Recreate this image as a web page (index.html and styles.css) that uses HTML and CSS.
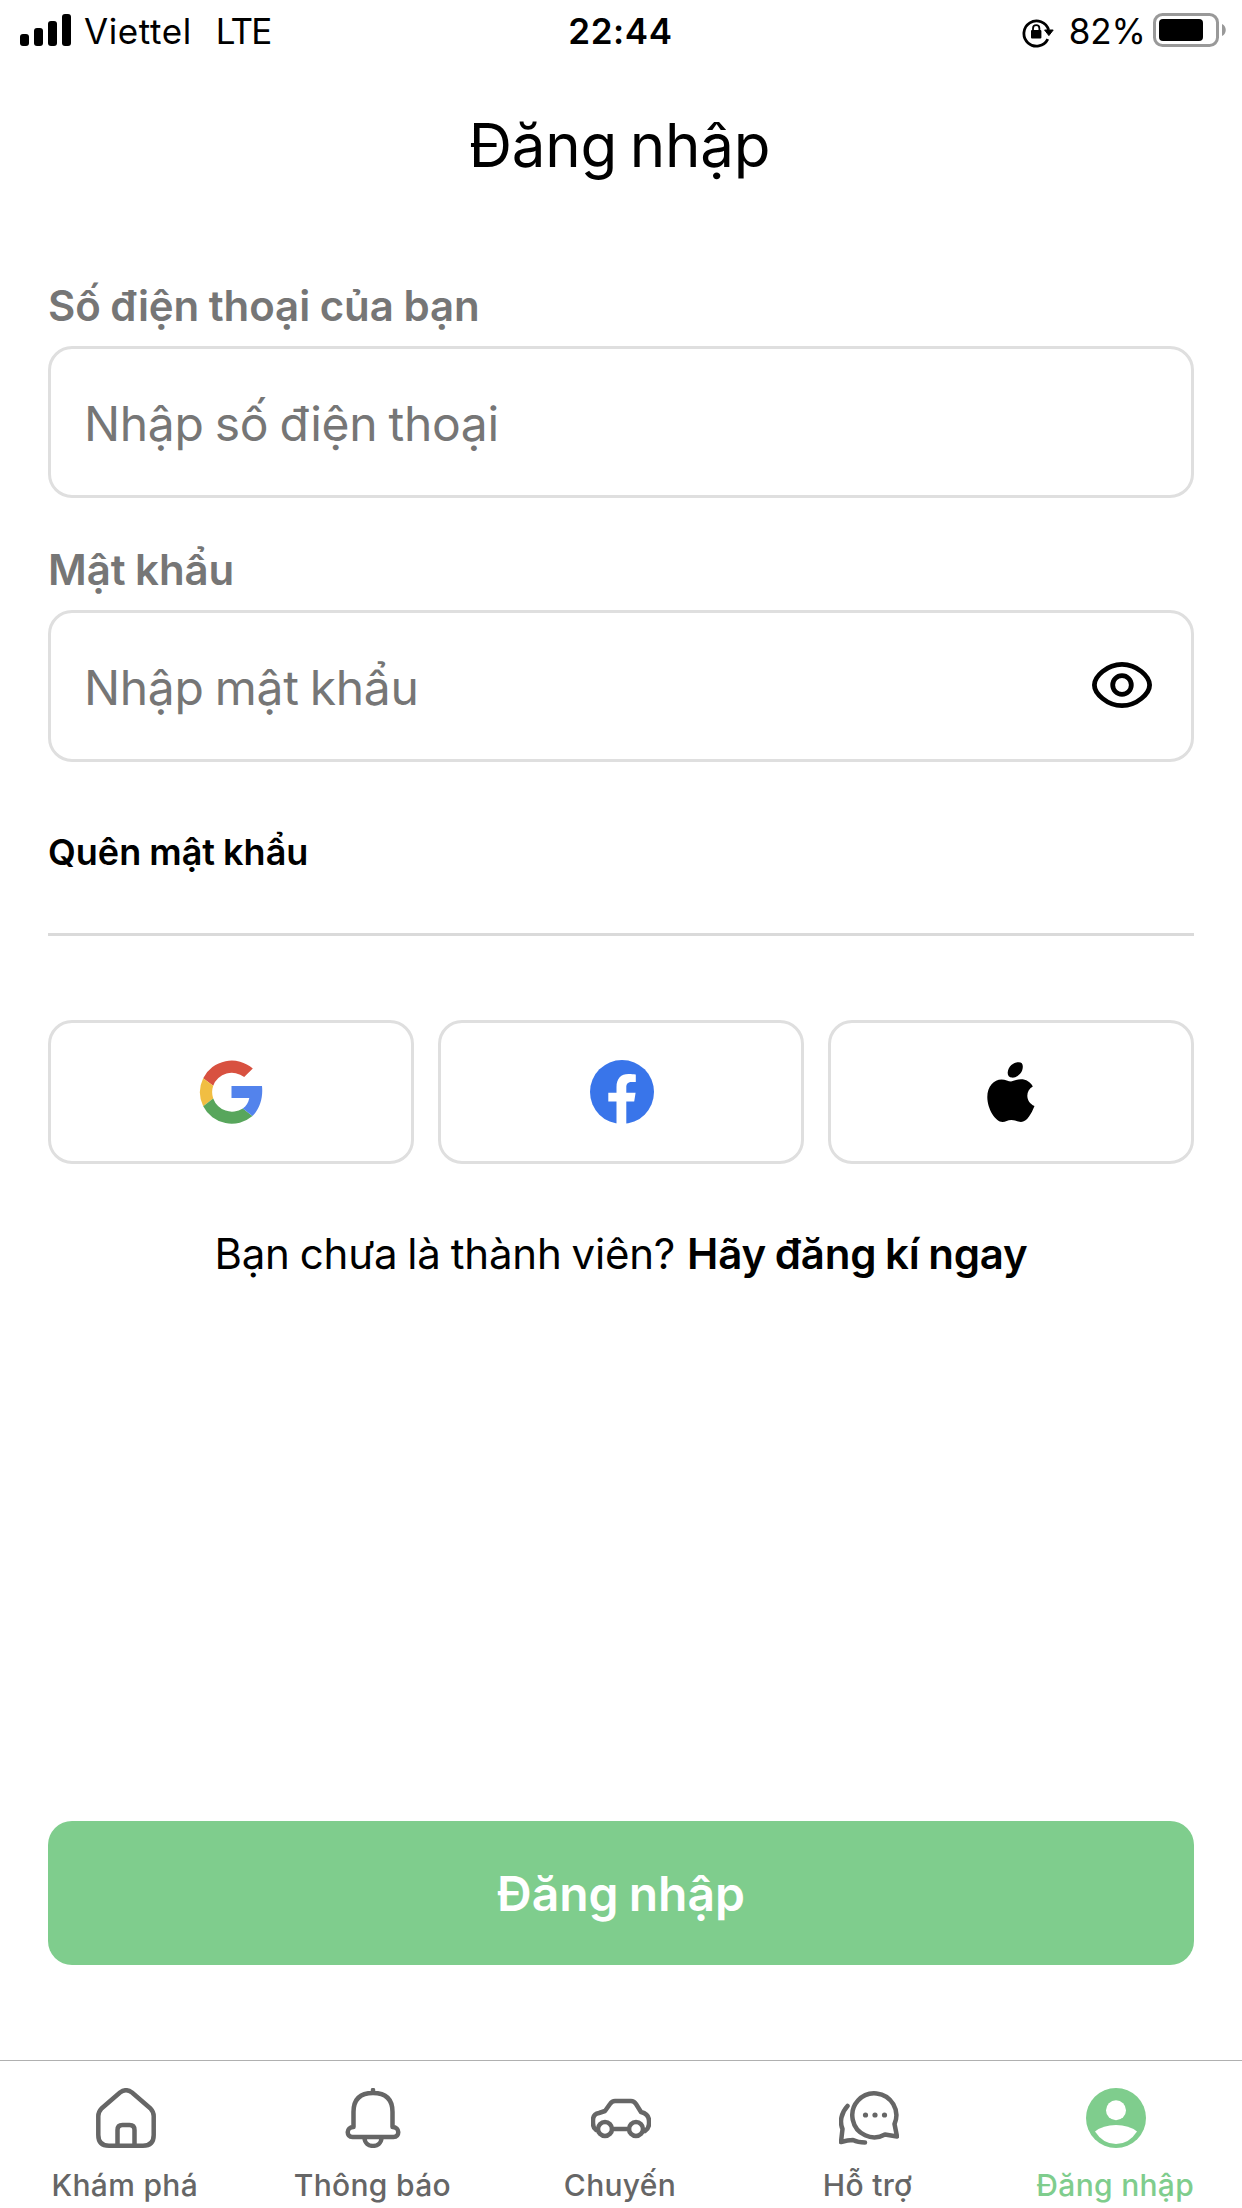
FILE: index.html
```html
<!DOCTYPE html>
<html lang="vi">
<head>
<meta charset="utf-8">
<title>Đăng nhập</title>
<link rel="stylesheet" href="styles.css">
</head>
<body>
<header class="status">
  <div class="status-left">
    <svg class="signal" viewBox="0 0 51 62"><rect x="0" y="34" width="9" height="12" rx="3"/><rect x="14" y="28" width="9" height="18" rx="3"/><rect x="28" y="21" width="9" height="25" rx="3"/><rect x="42" y="14" width="9" height="32" rx="3"/></svg>
    <span class="carrier">Viettel</span>
    <span class="network">LTE</span>
  </div>
  <span class="clock">22:44</span>
  <div class="status-right">
    <svg class="lock" viewBox="0 0 32 62"><path d="M25.800 39.200A12.600 12.600 0 1 1 26.600 30" fill="none" stroke="#000" stroke-width="2.800"/><path d="M22.600 30h8.600l-4.300 5.600z" stroke="#000" stroke-width="1" stroke-linejoin="round"/><rect x="9" y="30" width="10.400" height="8.600" rx="1"/><path d="M11 31v-2.600a3.200 3.200 0 0 1 6.400 0V31" fill="none" stroke="#000" stroke-width="1.800"/></svg>
    <span class="percent">82%</span>
    <svg class="battery" viewBox="0 0 73 62"><rect x="1.500" y="14.500" width="63" height="31" rx="8" fill="none" stroke="#999" stroke-width="3"/><rect x="6" y="19" width="44" height="22" rx="4"/><path d="M69 24c5 2 5 10 0 12z" fill="#999"/></svg>
  </div>
</header>
<h1 class="title">Đăng nhập</h1>
<main class="form">
  <div class="label">Số điện thoại của bạn</div>
  <div class="field"><span>Nhập số điện thoại</span></div>
  <div class="label">Mật khẩu</div>
  <div class="field"><span>Nhập mật khẩu</span>
    <svg class="eye" viewBox="0 0 60 46" fill="none" stroke="#000" stroke-width="4.800"><path d="M2.400 23C2.400 14.500 15 2.400 30 2.400S57.600 14.500 57.600 23 45 43.600 30 43.600 2.400 31.500 2.400 23z"/><circle cx="30" cy="23" r="9.300"/></svg>
  </div>
  <a class="forgot">Quên mật khẩu</a>
  <hr class="divider">
  <div class="social">
    <button class="provider" aria-label="Google"><svg class="google" viewBox="0 0 64 64"><path fill="#d85140" d="M4.200 18.200A32 32 0 0 1 53.800 8.400L45.200 17A20 20 0 0 0 14.200 25.700z"/><path fill="#f1be42" d="M4.200 18.200A32 32 0 0 0 4.200 46.200L14.200 38.500A20 20 0 0 1 14.200 25.700z"/><path fill="#58a65c" d="M4.200 46.200A32 32 0 0 0 53.500 56L43.800 48.500A20 20 0 0 1 14.200 38.500z"/><path fill="#5383ec" d="M32.500 26H63C64.200 37.500 61 48.500 53.500 56L43.800 48.500C47.400 46 49.400 42.500 50.300 38H32.500z"/></svg></button>
    <button class="provider" aria-label="Facebook"><svg class="facebook" viewBox="0 0 64 64"><circle cx="32" cy="32" r="32" fill="#3975ea"/><path fill="#fff" d="M26.500 64V41.500H18.300V32.700H26.500V27C26.500 18.500 31 14 38.500 14 41.500 14 45.800 14.500 45.800 14.500V22H41.500C37.500 22 36.300 24.500 36.300 27V32.700H45.600L44.200 41.500H36.300V64z"/></svg></button>
    <button class="provider" aria-label="Apple"><svg class="apple" viewBox="0 0 48 60"><path d="M31 .2Q36-.3 35.800 5C35.500 12 29 16 25 15.600Q20.500 15 20.700 10.500C21.200 4 26.500.5 31 .2zM24 19.600C27 19 29.500 17.300 34 17.300 39 17.300 43.500 20 45.800 24.500 38 29 38.500 40 47.500 44 44.500 51.500 40 60 34 60 30.500 60 28.500 58 24.500 58S18.500 60 15.500 60C8.500 60 .3 47 .3 35 .3 24 7 17.400 14.500 17.400 18.500 17.400 21.500 19.300 24 19.600z"/></svg></button>
  </div>
  <p class="signup"><span>Bạn chưa là thành viên?</span><b>Hãy đăng kí ngay</b></p>
  <button class="submit">Đăng nhập</button>
</main>
<nav class="tabs">
  <a class="tab"><svg viewBox="0 0 60 60"><path d="M24 4.500L5.500 20.500Q2.300 24 2.300 28V47Q2.300 57.700 13 57.700H47Q57.700 57.700 57.700 47V28Q57.700 24 54.500 20.500L36 4.500Q30 0 24 4.500zM21.500 58V42Q21.500 37 26.500 37H33.500Q38.500 37 38.500 42V58"/></svg><span>Khám phá</span></a>
  <a class="tab"><svg viewBox="0 0 60 60"><path d="M30 2V5M10.500 39V24Q10.500 5 30 5T49.500 24V39C57 39 57 49 50.500 49H9.500C3 49 3 39 10.500 39M21.500 50C22 60.500 38 60.500 38.500 50"/></svg><span>Thông báo</span></a>
  <a class="tab"><svg viewBox="0 0 60 60"><path d="M5 42Q2 40 2 35V32Q2 26 8 25L14 23 19 16Q21 13 24 13H40Q43 13 45 16L50 24Q58 26 58 33V36Q58 40 54 43M21 41H38"/><circle cx="14" cy="41" r="7"/><circle cx="45" cy="41" r="7"/></svg><span>Chuyến</span></a>
  <a class="tab"><svg viewBox="0 0 60 60"><path d="M8.500 18C2 25 .5 34 3.500 41L2 54Q9 52 14 52Q19 54.500 26 54.500M46 46.500A22 22 0 1 1 55.500 36L58 48.500z"/><g class="dots"><circle cx="26.500" cy="27" r="2.600"/><circle cx="36" cy="27" r="2.600"/><circle cx="45.500" cy="27" r="2.600"/></g></svg><span>Hỗ trợ</span></a>
  <a class="tab active"><svg viewBox="0 0 60 60"><circle class="disc" cx="30" cy="30" r="30"/><circle class="cut" cx="30" cy="22.300" r="10"/><path class="cut" d="M9 43.500Q17 37 30 37T51 43.500Q43 56 30 56T9 43.500z"/></svg><span>Đăng nhập</span></a>
</nav>
</body>
</html>
```
FILE: styles.css
```css
* { box-sizing: border-box; }
body {
  margin: 0;
  width: 1242px;
  height: 2208px;
  display: flex;
  flex-direction: column;
  overflow: hidden;
  background: #fff;
  color: #000;
  font-family: Inter, "Noto Sans", sans-serif;
}
svg { display: block; flex: none; }
button { font: inherit; padding: 0; }

.status {
  height: 62px;
  display: grid;
  grid-template-columns: 1fr auto 1fr;
  padding: 0 16px 0 20px;
  font-size: 35px;
  line-height: 62px;
}
.status-left, .status-right { display: flex; }
.status-right { justify-content: flex-end; }
.signal { width: 51px; height: 62px; margin-right: 13px; }
.carrier { margin-right: 24px; letter-spacing: 0.6px; }
.network { letter-spacing: -1.8px; }
.clock { margin-right: 5px; font-weight: 600; letter-spacing: 0.6px; }
.lock { width: 32px; height: 62px; margin-right: 15px; }
.percent { margin-right: 7px; }
.battery { width: 73px; height: 62px; }

.title {
  margin: 0;
  padding-right: 3px;
  font-size: 60px;
  font-weight: 400;
  line-height: 166px;
  letter-spacing: -0.2px;
  word-spacing: -4px;
  text-align: center;
}
.form {
  flex: 1;
  display: flex;
  flex-direction: column;
  padding: 50px 48px 95px;
}
.label {
  margin-bottom: 12px;
  color: #767676;
  font-size: 42px;
  font-weight: 600;
  line-height: 56px;
  letter-spacing: -0.1px;
  word-spacing: -0.8px;
}
.field {
  height: 152px;
  margin-bottom: 44px;
  padding: 3px 39px 0 33px;
  display: flex;
  align-items: center;
  justify-content: space-between;
  border: 3px solid #dfdfdf;
  border-radius: 24px;
  color: #767676;
  font-size: 48px;
  letter-spacing: -0.35px;
  word-spacing: -1.8px;
}
.eye { width: 60px; height: 46px; margin-bottom: 5px; }
.forgot {
  margin-top: 22px;
  font-size: 36px;
  font-weight: 600;
  line-height: 48px;
  word-spacing: -1px;
}
.divider {
  width: 100%;
  height: 3px;
  margin: 57px 0 84px;
  border: 0;
  background: #dadada;
}
.social {
  display: grid;
  grid-template-columns: repeat(3, 1fr);
  gap: 24px;
}
.provider {
  height: 144px;
  display: flex;
  align-items: center;
  justify-content: center;
  border: 3px solid #dfdfdf;
  border-radius: 24px;
  background: #fff;
}
.google, .facebook { width: 64px; height: 64px; }
.facebook { margin-left: 2px; }
.apple { width: 48px; height: 60px; }
.signup {
  margin: 62px 0 0;
  display: flex;
  justify-content: center;
  gap: 12px;
  font-size: 42px;
  line-height: 56px;
  letter-spacing: -0.2px;
  word-spacing: -1.6px;
}
.signup b { font-weight: 600; }
.submit {
  height: 144px;
  margin-top: auto;
  border: 0;
  border-radius: 24px;
  background: #7fcd8d;
  color: #fff;
  font-size: 48px;
  font-weight: 600;
  word-spacing: -2px;
}
.tabs {
  height: 148px;
  display: grid;
  grid-template-columns: repeat(5, 1fr);
  padding: 0 2px;
  border-top: 1px solid #b0b0b0;
}
.tab {
  padding-top: 27px;
  display: flex;
  flex-direction: column;
  align-items: center;
  gap: 19px;
  color: #666;
  font-size: 30px;
  font-weight: 500;
  line-height: 36px;
  letter-spacing: 0.3px;
}
.tab span { margin-right: 2px; }
.tab svg {
  width: 60px;
  height: 60px;
  fill: none;
  stroke: currentColor;
  stroke-width: 4.5;
  stroke-linecap: round;
  stroke-linejoin: round;
}
.tab .dots { fill: currentColor; stroke: none; }
.tab .disc { fill: currentColor; stroke: none; }
.tab .cut { fill: #fff; stroke: none; }
.active { color: #7fcd8d; }
```
